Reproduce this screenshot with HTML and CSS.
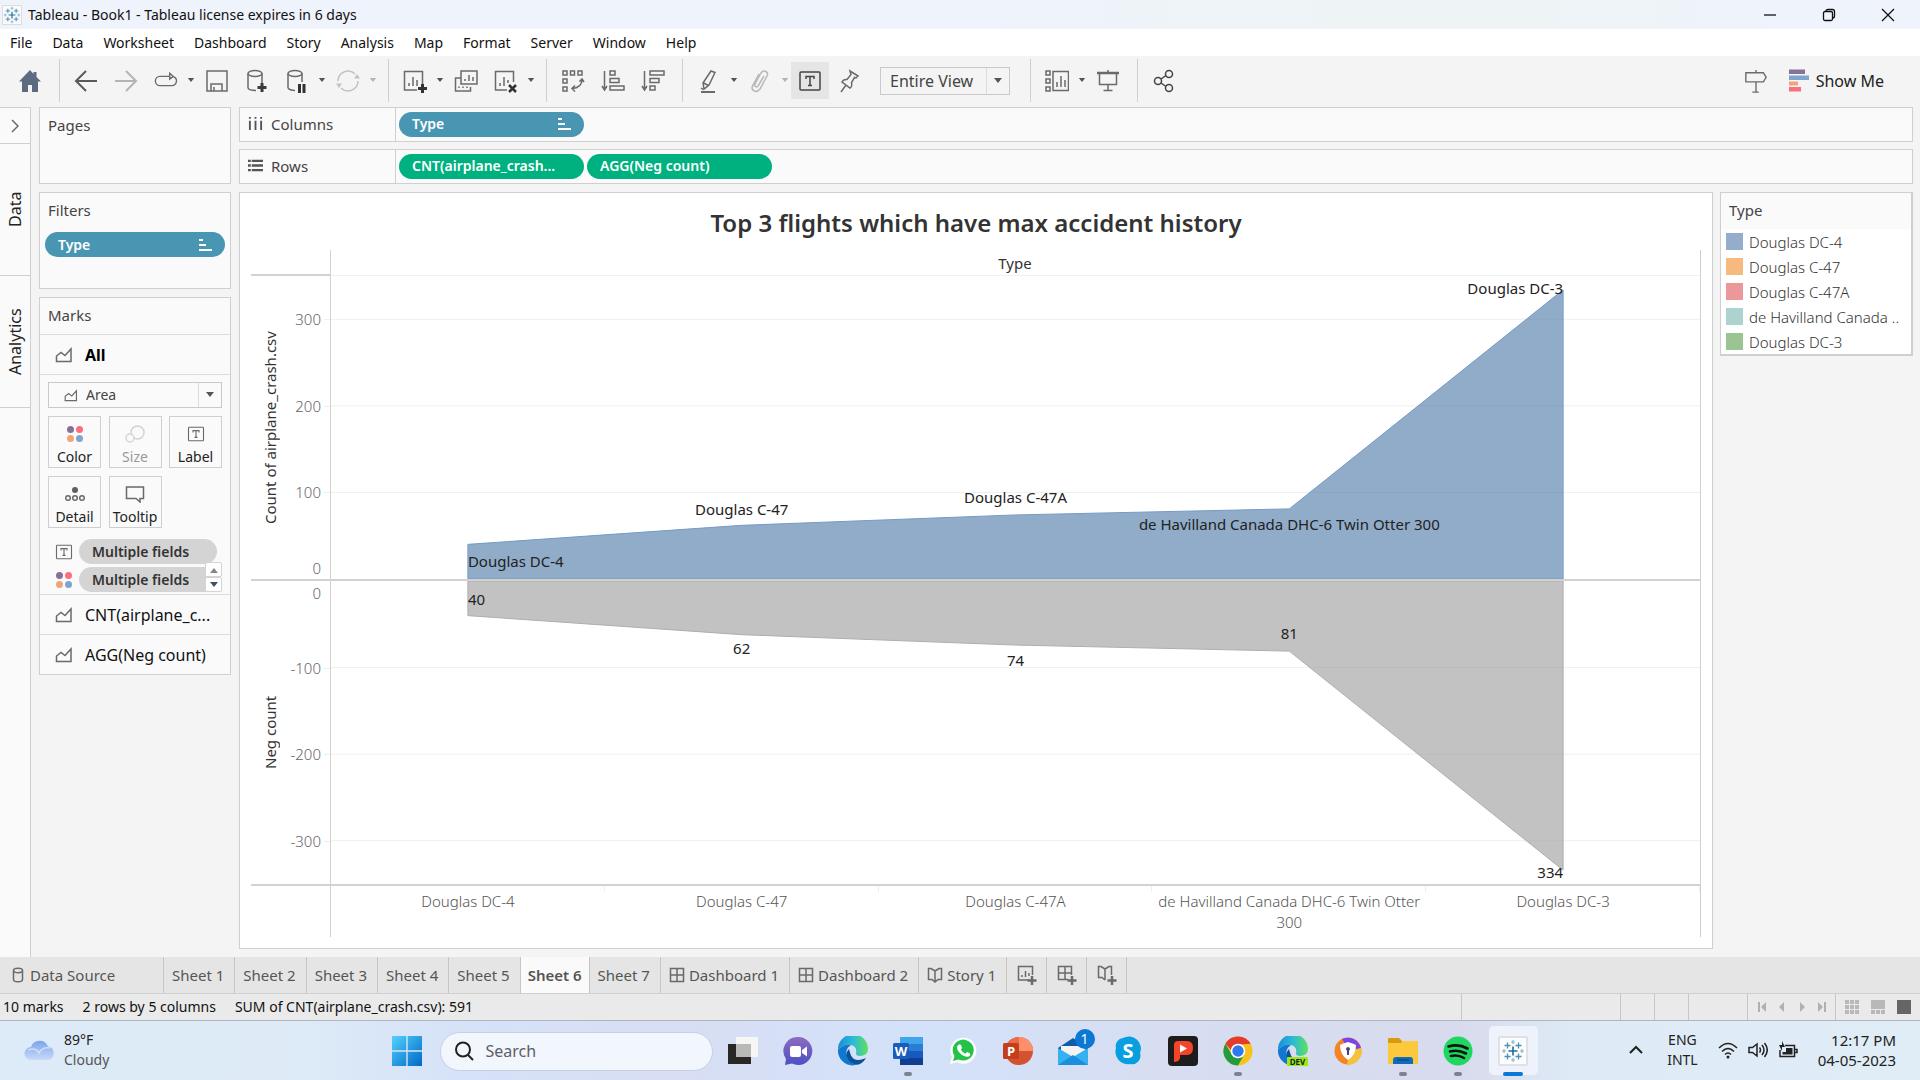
FILE: index.html
```html
<!DOCTYPE html>
<html lang="en">
<head>
<meta charset="utf-8">
<title>Tableau - Book1</title>
<link rel="stylesheet" href="styles.css">
</head>
<body>
<svg class="sprite" aria-hidden="true">
  <symbol id="caret" viewBox="0 0 10 6"><path d="M1 0h8L5 5z" fill="currentColor"/></symbol>
  <symbol id="area" viewBox="0 0 18 16"><path d="M1.5 14.5V9L6 5.500l4 3 6-6.500v12.500z"/></symbol>
  <symbol id="sort" viewBox="0 0 14 14"><path d="M1 1h4v2H1zM1 6h7v2H1zM1 11h13v2H1z" fill="currentColor"/></symbol>
  <symbol id="boxt" viewBox="0 0 24 24"><rect x="2" y="3" width="20" height="18" rx="1"/><path d="M8 10V7.500h8V10M12 7.500v9M10 16.500h4"/></symbol>
  <symbol id="dots" viewBox="0 0 18 18"><circle cx="4.500" cy="4.500" r="3.500" fill="#87709b"/><circle cx="13.500" cy="4.500" r="3.500" fill="#fa6e80"/><circle cx="4.500" cy="13.500" r="3.500" fill="#f2a477"/><circle cx="13.500" cy="13.500" r="3.500" fill="#7ea5cd"/></symbol>
  <symbol id="grid" viewBox="0 0 16 16"><path d="M1.500 1.500h13v13h-13zM8 1.500v13M1.500 8h13"/></symbol>
  <symbol id="book" viewBox="0 0 16 16"><path d="M8 4v11M8 4L4 1.500H1.500v11H5L8 15l3-2.500h3.500v-11H12z"/></symbol>
  <symbol id="tableau" viewBox="0 0 24 24"><path d="M12 7.500v9M7.500 12h9" stroke="#1f6c9c" stroke-width="1.600"/><path d="M6.500 3.500v6M3.500 6.500h6M17.500 3.500v6M14.500 6.500h6M6.500 14.500v6M3.500 17.500h6M17.500 14.500v6M14.500 17.500h6" stroke="#4a8fb8" stroke-width="1.300"/><path d="M12 1v4M10 3h4M12 19v4M10 21h4M3 10v4M1 12h4M21 10v4M19 12h4" stroke="#7fb2d0" stroke-width="1.100"/></symbol>
</svg>

<div class="app">
  <header class="titlebar">
    <svg class="app-logo" viewBox="0 0 24 24"><use href="#tableau"/></svg>
    <span class="app-title">Tableau - Book1 - Tableau license expires in 6 days</span>
    <div class="window-buttons">
      <button aria-label="Minimize"><svg viewBox="0 0 14 14"><path d="M1 7h12"/></svg></button>
      <button aria-label="Restore"><svg viewBox="0 0 14 14"><rect x="1.500" y="3.500" width="9" height="9" rx="1.500"/><path d="M4 3.500q0-2 2-2h4.500q2 0 2 2V8q0 2-2 2"/></svg></button>
      <button aria-label="Close"><svg viewBox="0 0 14 14"><path d="M1 1l12 12M13 1L1 13"/></svg></button>
    </div>
  </header>

  <nav class="menubar">
    <a href="#">File</a><a href="#">Data</a><a href="#">Worksheet</a><a href="#">Dashboard</a><a href="#">Story</a><a href="#">Analysis</a><a href="#">Map</a><a href="#">Format</a><a href="#">Server</a><a href="#">Window</a><a href="#">Help</a>
  </nav>

  <div class="toolbar">
    <button class="tool" aria-label="Start page"><svg viewBox="0 0 24 24"><path d="M12 1L1 12.500h3V23h6v-7h4v7h6V12.500h3L18.500 8V3h-3v2z" fill="#5d6b80" stroke="none"/></svg></button>
    <i class="sep"></i>
    <button class="tool" aria-label="Undo"><svg viewBox="0 0 24 24"><path d="M23 12H2M12 2L2 12l10 10" stroke="#5a5a5a" stroke-width="2"/></svg></button>
    <button class="tool" aria-label="Redo"><svg viewBox="0 0 24 24"><path d="M1 12h21M12 2l10 10-10 10" stroke="#b4b4b4" stroke-width="2"/></svg></button>
    <button class="tool menu" aria-label="Replay"><svg viewBox="0 0 26 24"><path d="M17 7H6.500a5 5 0 0 0 0 10h13a5 5 0 0 0 2-9.500M17 3.500V10l4-3z"/></svg></button><button class="drop" aria-label="Replay options"><svg><use href="#caret"/></svg></button>
    <button class="tool" aria-label="Save"><svg viewBox="0 0 24 24"><path d="M2 2h20v20H2zM6 22v-7h11v7M9 18v4"/></svg></button>
    <button class="tool" aria-label="New data source"><svg viewBox="0 0 24 24"><ellipse cx="10" cy="4.500" rx="7" ry="3"/><path d="M3 4.500v14c0 2 4 3 8 3M17 4.500V14"/><path d="M17 14v9M12.500 18.500h9" stroke="#3a3a3a" stroke-width="3"/></svg></button>
    <button class="tool menu" aria-label="Pause auto updates"><svg viewBox="0 0 24 24"><ellipse cx="10" cy="4.500" rx="7" ry="3"/><path d="M3 4.500v14c0 2 4 3 7 3M17 4.500V13"/><path d="M14.500 15v9M19 15v9" stroke="#333" stroke-width="3"/></svg></button><button class="drop" aria-label="Pause options"><svg><use href="#caret"/></svg></button>
    <button class="tool menu" aria-label="Run update"><svg viewBox="0 0 24 24"><path d="M2 12a10 10 0 0 1 17-7M22 12a10 10 0 0 1-17 7" stroke="#c2c2c2"/><path d="M18 9.500h6L21 5zM0 14.500h6L3 19z" fill="#c2c2c2" stroke="none"/></svg></button><button class="drop off" aria-label="Update options"><svg><use href="#caret"/></svg></button>
    <i class="sep"></i>
    <button class="tool menu" aria-label="New worksheet"><svg viewBox="0 0 24 24"><path d="M14 21H1.500V2.500h18V15M6 17v-3M10 17V8M14 17v-6"/><path d="M19.500 15v9M15 19.500h9" stroke="#333" stroke-width="3"/></svg></button><button class="drop" aria-label="New worksheet options"><svg><use href="#caret"/></svg></button>
    <button class="tool" aria-label="Duplicate"><svg viewBox="0 0 24 24"><path d="M7 2h16v13H7zM11 12v-2M15 12V6M19 12V8M7 9H1.500v13h15v-4M5 19v-1.500M9 19v-1.500M13 19v-1.500"/></svg></button>
    <button class="tool menu" aria-label="Clear sheet"><svg viewBox="0 0 24 24"><path d="M13 21H1.500V2.500h18V13M6 17v-3M10 17V8M14 14v-3"/><path d="M15 16l7 7M22 16l-7 7" stroke="#333" stroke-width="2.500"/></svg></button><button class="drop" aria-label="Clear options"><svg><use href="#caret"/></svg></button>
    <i class="sep"></i>
    <button class="tool" aria-label="Swap rows and columns"><svg viewBox="0 0 24 24"><path d="M2 2h4v4H2zM9.500 2h4v4h-4zM17 2h4v4h-4zM2 10h4v4H2zM2 18h4v4H2zM21 10q0 9-10 9.500M18.500 12.500L21 10l2 3M14 16.500l-3 3 3 3"/></svg></button>
    <button class="tool" aria-label="Sort ascending"><svg viewBox="0 0 24 24"><path d="M3.500 2v18M1 17l2.500 4L6 17M9 2h5v4H9zM9 9.500h9v4H9zM9 17h14v4H9z"/></svg></button>
    <button class="tool" aria-label="Sort descending"><svg viewBox="0 0 24 24"><path d="M3.500 2v18M1 17l2.500 4L6 17M9 2h14v4H9zM9 9.500h9v4H9zM9 17h5v4H9z"/></svg></button>
    <i class="sep"></i>
    <button class="tool menu" aria-label="Highlight"><svg viewBox="0 0 24 24"><path d="M14 2l4 1.500-6 12.500-5 4-1-6zM6.500 14l5 2.500M4 19l2 1.500"/><path d="M4 23h14" stroke-width="2"/></svg></button><button class="drop" aria-label="Highlight options"><svg><use href="#caret"/></svg></button>
    <button class="tool menu" aria-label="Group members"><svg viewBox="0 0 24 24"><path d="M16 7l-6 10c-2 2-4 0-3-2l6-11c3-4 8-1 6 3l-7 13c-4 5-10 1-7-4l6-11" stroke="#b9b9b9"/></svg></button><button class="drop off" aria-label="Group options"><svg><use href="#caret"/></svg></button>
    <button class="tool on" aria-label="Show mark labels" aria-pressed="true"><svg class="dark"><use href="#boxt"/></svg></button>
    <button class="tool" aria-label="Fix axes"><svg viewBox="0 0 24 24"><path d="M13 2l8 5-2 2-1.500-.5-3 5q1 4-1.500 5.500L5 13q1.500-3 5-2.500l4-5zM9 16l-5 7"/></svg></button>
    <div class="select fit"><select aria-label="Fit"><option>Entire View</option></select><svg><use href="#caret"/></svg></div>
    <i class="sep wide"></i>
    <button class="tool menu" aria-label="Show cards"><svg viewBox="0 0 24 24"><path d="M1 2h4v4H1zM1 10h4v4H1zM1 18h4v4H1zM8 2.500h15.500v19H8zM12 18v-5M16 18V7M20 18v-7"/></svg></button><button class="drop" aria-label="Card options"><svg><use href="#caret"/></svg></button>
    <button class="tool" aria-label="Presentation mode"><svg viewBox="0 0 24 24"><path d="M1 4h22" stroke-width="2.500"/><path d="M12 1v3M3.500 4v11.500h17V4M12 15.500v6M7.500 21.500h9"/></svg></button>
    <i class="sep"></i>
    <button class="tool" aria-label="Share"><svg class="dark" viewBox="0 0 24 24"><circle cx="6" cy="12" r="3.500"/><circle cx="17" cy="5" r="3.500"/><circle cx="17" cy="19" r="3.500"/><path d="M9 10l5-3.500M9 14l5 3.500"/></svg></button>
    <button class="tool guide" aria-label="Guide"><svg viewBox="0 0 24 26"><path d="M1 4h19l3 5-3 5H1zM12 1v3M12 14v11M8 25h7"/></svg></button>
    <button class="show-me"><svg viewBox="0 0 22 22"><path d="M1 0h16v4.500H1z" fill="#87709b"/><path d="M1 6h20v4.500H1z" fill="#7ea5cd"/><path d="M1 12h9v4H1z" fill="#f2a477"/><path d="M1 17.500h12V22H1z" fill="#fa6e80"/></svg>Show Me</button>
  </div>

  <main class="workspace">
    <aside class="rail">
      <button class="expand" aria-label="Expand pane"><svg viewBox="0 0 8 14"><path d="M1 1l6 6-6 6"/></svg></button>
      <button class="rail-tab">Data</button>
      <button class="rail-tab">Analytics</button>
    </aside>

    <aside class="cards">
      <section class="card pages"><h2>Pages</h2></section>
      <section class="card filters"><h2>Filters</h2><button class="pill blue">Type<svg><use href="#sort"/></svg></button></section>
      <section class="card marks">
        <h2>Marks</h2>
        <button class="mark-row all"><svg><use href="#area"/></svg>All</button>
        <div class="mark-body">
          <div class="select type"><svg class="lead"><use href="#area"/></svg><select aria-label="Mark type"><option>Area</option></select><svg><use href="#caret"/></svg></div>
          <div class="mark-buttons">
            <button><svg viewBox="0 0 18 18"><use href="#dots"/></svg>Color</button>
            <button disabled><svg viewBox="0 0 20 18"><circle cx="12.500" cy="7.500" r="6.500"/><circle cx="5" cy="13" r="4" fill="#fafafa"/></svg>Size</button>
            <button><svg><use href="#boxt"/></svg>Label</button>
            <button><svg viewBox="0 0 20 18"><circle cx="10" cy="5" r="3" fill="#5f5f5f" stroke="none"/><circle cx="3" cy="13" r="2.300"/><circle cx="10" cy="13" r="2.300"/><circle cx="17" cy="13" r="2.300"/></svg>Detail</button>
            <button><svg viewBox="0 0 20 18"><path d="M1.500 2h17v11.500H15V17l-4-3.500H1.500z"/></svg>Tooltip</button>
          </div>
          <div class="encodings">
            <svg><use href="#boxt"/></svg><button class="pill gray">Multiple fields</button>
            <svg><use href="#dots"/></svg><button class="pill gray">Multiple fields</button>
            <div class="stepper"><button aria-label="Scroll up"><svg class="flip"><use href="#caret"/></svg></button><button aria-label="Scroll down"><svg><use href="#caret"/></svg></button></div>
          </div>
        </div>
        <button class="mark-row"><svg><use href="#area"/></svg>CNT(airplane_c...</button>
        <button class="mark-row"><svg><use href="#area"/></svg>AGG(Neg count)</button>
      </section>
    </aside>

    <div class="canvas">
      <section class="shelf">
        <h2><svg viewBox="0 0 16 16"><path d="M2 1v2M2 5v10M8 1v2M8 5v10M14 1v2M14 5v10" stroke-width="2"/></svg>Columns</h2>
        <div class="drops"><button class="pill blue">Type<svg><use href="#sort"/></svg></button></div>
      </section>
      <section class="shelf">
        <h2><svg viewBox="0 0 16 16"><path d="M0 3h3M4 3h12M0 8h3M4 8h12M0 13h3M4 13h12" stroke-width="2.500"/></svg>Rows</h2>
        <div class="drops"><button class="pill green">CNT(airplane_crash...</button><button class="pill green">AGG(Neg count)</button></div>
      </section>

      <div class="stage">
        <section class="view">
          <h1>Top 3 flights which have max accident history</h1>
          <div class="chart">
            <div class="corner"></div>
            <div class="col-title">Type</div>

            <div class="axis">
              <span class="axis-title">Count of airplane_crash.csv</span>
              <span class="tick" style="--y:14.300%">300</span><span class="tick" style="--y:42.900%">200</span><span class="tick" style="--y:71.400%">100</span><span class="tick zero" style="--y:96.500%">0</span>
            </div>
            <div class="pane">
              <svg viewBox="0 0 500 350" preserveAspectRatio="none">
                <path class="gridline" d="M0 50H500M0 150H500M0 250H500"/>
                <path class="mark-blue" d="M50 350V310L150 288L250 276L350 269L450 16V350z"/>
              </svg>
              <span class="label start" style="--x:10%;--y:94%">Douglas DC-4</span>
              <span class="label" style="--x:30%;--y:77%">Douglas C-47</span>
              <span class="label" style="--x:50%;--y:73%">Douglas C-47A</span>
              <span class="label" style="--x:70%;--y:82%">de Havilland Canada DHC-6 Twin Otter 300</span>
              <span class="label end" style="--x:90%;--y:4%">Douglas DC-3</span>
            </div>

            <div class="axis">
              <span class="axis-title">Neg count</span>
              <span class="tick zero" style="--y:4%">0</span><span class="tick" style="--y:28.600%">-100</span><span class="tick" style="--y:57.100%">-200</span><span class="tick" style="--y:85.700%">-300</span>
            </div>
            <div class="pane">
              <svg viewBox="0 0 500 350" preserveAspectRatio="none">
                <path class="gridline" d="M0 100H500M0 200H500M0 300H500"/>
                <path class="mark-gray" d="M50 0V40L150 62L250 74L350 81L450 334V0z"/>
              </svg>
              <span class="label start" style="--x:10%;--y:6%">40</span>
              <span class="label" style="--x:30%;--y:22%">62</span>
              <span class="label" style="--x:50%;--y:26%">74</span>
              <span class="label" style="--x:70%;--y:17%">81</span>
              <span class="label end" style="--x:90%;--y:96%">334</span>
            </div>

            <div class="corner-bottom"></div>
            <div class="columns"><span>Douglas DC-4</span><span>Douglas C-47</span><span>Douglas C-47A</span><span>de Havilland Canada DHC-6 Twin Otter 300</span><span>Douglas DC-3</span></div>
          </div>
        </section>

        <section class="legend">
          <h2>Type</h2>
          <ul><li class="c1">Douglas DC-4</li><li class="c2">Douglas C-47</li><li class="c3">Douglas C-47A</li><li class="c4">de Havilland Canada ..</li><li class="c5">Douglas DC-3</li></ul>
        </section>
      </div>
    </div>
  </main>

  <nav class="tabs">
    <button class="source"><svg viewBox="0 0 16 16"><ellipse cx="8" cy="3.500" rx="4.500" ry="2.200"/><path d="M3.500 3.500v9c0 3 9 3 9 0v-9"/></svg>Data Source</button>
    <button>Sheet 1</button><button>Sheet 2</button><button>Sheet 3</button><button>Sheet 4</button><button>Sheet 5</button><button class="current">Sheet 6</button><button>Sheet 7</button>
    <button><svg><use href="#grid"/></svg>Dashboard 1</button><button><svg><use href="#grid"/></svg>Dashboard 2</button><button><svg><use href="#book"/></svg>Story 1</button>
    <button class="add" aria-label="New worksheet"><svg viewBox="0 0 20 20"><path d="M12 15H1.500V1.500h14V10M5 12v-2M8.500 12V6M12 11V8"/><path d="M15 11v9M10.500 15.500h9" stroke-width="2.500"/></svg></button>
    <button class="add" aria-label="New dashboard"><svg viewBox="0 0 20 20"><path d="M11 14.500H1.500v-13h13V10M8 1.500v13M1.500 8h13"/><path d="M15 11v9M10.500 15.500h9" stroke-width="2.500"/></svg></button>
    <button class="add" aria-label="New story"><svg viewBox="0 0 20 20"><path d="M8 4v11M8 4L4 1.500H1.500v11H5L8 15M8 4l4-2.500h2.500V10"/><path d="M15 11v9M10.500 15.500h9" stroke-width="2.500"/></svg></button>
  </nav>

  <footer class="status">
    <span>10 marks</span><span>2 rows by 5 columns</span><span>SUM of CNT(airplane_crash.csv): 591</span>
    <div class="status-right">
      <i class="cell w159"></i><i class="cell w34"></i><i class="cell w34"></i><i class="cell w59"></i>
      <div class="cell pager">
        <button aria-label="First"><svg viewBox="0 0 10 10"><path d="M1 0h2v10H1zM9 0v10L4 5z"/></svg></button>
        <button aria-label="Previous"><svg viewBox="0 0 10 10"><path d="M7 0v10L2 5z"/></svg></button>
        <button aria-label="Next"><svg viewBox="0 0 10 10"><path d="M3 0v10l5-5z"/></svg></button>
        <button aria-label="Last"><svg viewBox="0 0 10 10"><path d="M7 0h2v10H7zM1 0v10l5-5z"/></svg></button>
      </div>
      <div class="cell modes">
        <button aria-label="Sheet sorter"><svg viewBox="0 0 14 14"><path d="M0 0h4v4H0zM5 0h4v4H5zM10 0h4v4h-4zM0 5h4v4H0zM5 5h4v4H5zM10 5h4v4h-4zM0 10h4v4H0zM5 10h4v4H5zM10 10h4v4h-4z"/></svg></button>
        <button aria-label="Filmstrip"><svg viewBox="0 0 14 14"><path d="M0 0h14v9H0zM0 10h4v4H0zM5 10h4v4H5zM10 10h4v4h-4z"/></svg></button>
        <button class="active" aria-label="Tabs"><svg viewBox="0 0 14 14"><path d="M0 0h14v14H0z"/></svg></button>
      </div>
    </div>
  </footer>
</div>

<footer class="taskbar">
  <button class="weather">
    <svg viewBox="0 0 32 24"><defs><linearGradient id="cl" x2="0" y2="1"><stop stop-color="#7ea3ec"/><stop offset="1" stop-color="#c7daf8"/></linearGradient></defs><path d="M7 22a6.500 6.500 0 0 1 0-13 9 9 0 0 1 17-.5 7 7 0 0 1 1 13.500z" fill="url(#cl)"/><path d="M4 12q8-3 11 3 3-6 11-5" fill="none" stroke="#e4edfc" stroke-width="1.500" opacity=".7"/></svg>
    <span><b>89°F</b>Cloudy</span>
  </button>

  <div class="dock">
    <button aria-label="Start"><svg viewBox="0 0 30 30"><defs><linearGradient id="win" x2="1" y2="1"><stop stop-color="#52d1fb"/><stop offset="1" stop-color="#0068c8"/></linearGradient></defs><path d="M0 0h14.300v14.300H0zM15.700 0H30v14.300H15.700zM0 15.700h14.300V30H0zM15.700 15.700H30V30H15.700z" fill="url(#win)"/></svg></button>
    <label class="search"><svg viewBox="0 0 20 20"><circle cx="9" cy="8.500" r="7"/><path d="M14 14l5 5"/></svg><input type="search" placeholder="Search" aria-label="Search"></label>
    <button aria-label="Task view"><svg viewBox="0 0 30 30"><path d="M0 8h23v20H0z" fill="#292826"/><path d="M8 1h22v20H8z" fill="#f6f6f6"/><path d="M8 8h15v13H8z" fill="#b9b9b8"/></svg></button>
    <button aria-label="Chat"><svg viewBox="0 0 30 30"><defs><linearGradient id="ch" x2="0" y2="1"><stop stop-color="#8d6cc0"/><stop offset="1" stop-color="#4d50c4"/></linearGradient></defs><path d="M15 1a14 14 0 1 1-6 26.500L2 29l1-6A14 14 0 0 1 15 1z" fill="url(#ch)"/><rect x="7" y="10" width="11" height="11" rx="2" fill="#fff"/><path d="M19 14l5-3.500v10L19 17z" fill="#fff"/></svg></button>
    <button aria-label="Edge"><svg viewBox="0 0 30 30"><use href="#edge"/></svg></button>
    <button class="open" aria-label="Word"><svg viewBox="0 0 30 30"><path d="M7 1h23v8H7z" fill="#41a5ee"/><path d="M7 8h23v7H7z" fill="#2b7cd3"/><path d="M7 15h23v7H7z" fill="#185abd"/><path d="M7 22h23v7H7z" fill="#103f91"/><rect y="7" width="16" height="16" rx="1.500" fill="#1a5cbe"/><text x="8" y="19.500" class="glyph">W</text></svg></button>
    <button aria-label="WhatsApp"><svg viewBox="0 0 30 30"><path d="M2 28l2-7a13 13 0 1 1 5 5z" fill="#fff"/><path d="M5 25l1.500-5a10.500 10.500 0 1 1 4 3.500z" fill="#25c24a"/><path d="M11 8.500c2-1 2.500 2 3 3.500l-1.200 1.500q1.500 3 4.500 4.200L19 16c3 1 4 2 3 3.500-3 4-13-2.500-13-8q0-2 2-3z" fill="#fff"/></svg></button>
    <button aria-label="PowerPoint"><svg viewBox="0 0 30 30"><circle cx="16" cy="15" r="14" fill="#d35230"/><path d="M16 1a14 14 0 0 1 14 14H16z" fill="#ff8f6b"/><path d="M16 1v14H2A14 14 0 0 1 16 1z" fill="#ed6c47"/><rect y="7" width="16" height="16" rx="1.500" fill="#c43e1c"/><text x="8" y="19.500" class="glyph">P</text></svg></button>
    <button class="badged" aria-label="Mail, 1 unread"><svg viewBox="0 0 30 30"><path d="M0 12L15 2l15 10v17H0z" fill="#0f5da8"/><path d="M3 10h24v10H3z" fill="#f4f4f4"/><path d="M0 12l15 9 15-9v17H0z" fill="#35b1f1"/><path d="M0 29l15-10 15 10z" fill="#1b8fdc"/></svg><span class="badge">1</span></button>
    <button aria-label="Skype"><svg viewBox="0 0 30 30"><path d="M10 2A12 12 0 0 1 27 17a8.500 8.500 0 0 1-10 11A12.500 12.500 0 0 1 3 12 8 8 0 0 1 10 2z" fill="#089fe0"/><text x="15" y="22" class="glyph big">S</text></svg></button>
    <button aria-label="Video player"><svg viewBox="0 0 30 30"><rect width="30" height="30" rx="4" fill="#1d1d1d"/><path d="M6 9q0-4 4-4h9q6 0 6 7t-6 7h-7v3q-1 4-6 4z" fill="#f4452a"/><path d="M12 8.500v8l7-4z" fill="#fff"/></svg></button>
    <button class="open" aria-label="Chrome"><svg viewBox="0 0 30 30"><circle cx="15" cy="15" r="14.500" fill="#f9c21a"/><path d="M2.400 7.700A14.500 14.500 0 0 1 27.600 7.700L15 8.500z" fill="#e33b2e"/><path d="M2.400 7.700A14.500 14.500 0 0 0 15 29.500L21.300 18.500 15 15 8.700 18.500z" fill="#249a45"/><path d="M2.400 7.700h25.200H15L9 15z" fill="#e33b2e"/><circle cx="15" cy="15" r="7.300" fill="#fff"/><circle cx="15" cy="15" r="5.700" fill="#2f78ee"/></svg></button>
    <button aria-label="Edge Dev"><svg viewBox="0 0 30 30"><use href="#edge"/><rect x="9" y="21" width="21" height="9" rx="1" fill="#9be812"/><text x="19.500" y="28.500" class="glyph dev">DEV</text></svg></button>
    <button aria-label="Secure browser"><svg viewBox="0 0 30 30"><circle cx="15" cy="15" r="13.500" fill="#f58424"/><path d="M9 3a13.500 13.500 0 0 1 19 9l-12 2z" fill="#7a46e8"/><path d="M28.500 12A13.500 13.500 0 0 1 14 28.500l3-13z" fill="#f6c23d"/><path d="M15 6q5 1.500 8 3 0 10-8 15-8-5-8-15 3-1.500 8-3z" fill="#fff"/><path d="M15 11a2 2 0 0 1 1 3.700V19h-2v-4.300A2 2 0 0 1 15 11z" fill="#4a3f78"/></svg></button>
    <button class="open" aria-label="File Explorer"><svg viewBox="0 0 30 30"><path d="M0 3q0-1 1-1h10l3 3v5H0z" fill="#d99a0c"/><path d="M0 7h13l2-2h15v23H0z" fill="#fcc93c"/><path d="M5 28v-4q0-3 3-3h14q3 0 3 3v4z" fill="#0f6cbd"/><path d="M9 24h12" stroke="#0a4a86" stroke-width="1.500"/></svg></button>
    <button class="open" aria-label="Spotify"><svg viewBox="0 0 30 30"><circle cx="15" cy="15" r="14.500" fill="#1ed760"/><path d="M5.500 10.500q10-3 19 2M7 15.500q8-2.300 16 2M8 20q7-1.700 13 2" fill="none" stroke="#111" stroke-width="2.600" stroke-linecap="round"/></svg></button>
    <button class="focused" aria-label="Tableau"><svg viewBox="0 0 30 30"><rect x="1" y="1" width="28" height="28" rx="1" fill="#fcfcfc" stroke="#d6d9de"/><use href="#tableau" x="3" y="3" width="24" height="24"/></svg></button>
  </div>

  <div class="tray">
    <button aria-label="Hidden icons"><svg viewBox="0 0 14 10"><path d="M1 8l6-6 6 6" stroke-width="2"/></svg></button>
    <button class="lang">ENG<br>INTL</button>
    <button class="net" aria-label="Network, volume, battery">
      <svg viewBox="0 0 20 18"><path d="M1 7q9-9 18 0M4 10.500q6-6 12 0M7 13.500q3-3 6 0"/><circle cx="10" cy="16" r="1.500" fill="#222" stroke="none"/></svg>
      <svg viewBox="0 0 20 18"><path d="M1 6.500h3.500L9 3v12l-4.500-3.500H1zM11.500 6.500q2 2.500 0 5M14 4q4 5 0 10M16.500 2q5.500 7 0 14"/></svg>
      <svg viewBox="0 0 20 18"><path d="M7 4.500h9.500v11H2V9M17 8.500h2v3h-2"/><path d="M8 7h6.500v6.500H4.500V11H8z" fill="#222" stroke="none"/><path d="M4 0v4H1l3 6V6h3z" fill="#222" stroke="none"/></svg>
    </button>
    <button class="clock">12:17 PM<br>04-05-2023</button>
  </div>
  <svg class="sprite" aria-hidden="true"><defs><linearGradient id="eg" x2="1"><stop stop-color="#1c8bd8"/><stop offset=".5" stop-color="#2bbbd6"/><stop offset="1" stop-color="#5fe05a"/></linearGradient></defs>
    <symbol id="edge" viewBox="0 0 30 30"><path d="M0 14A15 15 0 0 1 30 12.500q0 7-7.500 7.500-4.500 0-4.500-2.500 1.500-7-5-8.500Q5 8 0 14z" fill="url(#eg)"/><path d="M0 14q5-6 13-5-5 3-4.500 8 1 9 9 11.500-1 1-3 1A15 15 0 0 1 0 14z" fill="#1177cf"/><path d="M11 13q-3 3-2.500 6 1 7.500 9 9.800Q24 29 28 22q-11 5-15-2.500-1.500-4-2-6.500z" fill="#0c4f9b"/></symbol></svg>
</footer>
</body>
</html>
```

FILE: styles.css
```css
* { box-sizing: border-box; }
body {
  margin: 0;
  min-height: 100vh;
  display: flex;
  flex-direction: column;
  font: 15px/20px "Noto Sans", "Open Sans", sans-serif;
  color: #333;
  background: #f4f4f4;
}
h1, h2, ul { margin: 0; padding: 0; font-weight: 400; }
h2 { font-size: 15px; color: #444; }
ul { list-style: none; }
button, select, input { font: inherit; color: inherit; background: none; border: 0; padding: 0; margin: 0; }
button { display: flex; align-items: center; white-space: nowrap; }
a { color: inherit; text-decoration: none; }
svg { display: block; flex: none; fill: none; stroke: #6a6a6a; stroke-width: 1.5; }
.sprite { position: absolute; width: 0; height: 0; }
svg:has(use[href="#caret"]), svg:has(use[href="#sort"]) { stroke: none; }
svg:has(use[href="#dots"]) { stroke: none; }

.app { flex: 1; display: flex; flex-direction: column; }

/* Title and menu */
.titlebar { display: flex; align-items: center; height: 29px; padding-left: 2px; background: linear-gradient(90deg, #eff3fb 52%, #eef4f6 70%, #eef4f6 80%, #eff3fb 92%); font-size: 14px; color: #111; }
.app-logo { width: 20px; height: 20px; background: #fafafa; border: 1px solid #ddd; margin-right: 6px; }
.window-buttons { display: flex; margin-left: auto; padding-right: 3px; }
.window-buttons button { width: 59px; height: 29px; justify-content: center; }
.window-buttons svg { width: 14px; height: 14px; stroke: #111; stroke-width: 1.3; }
.menubar { display: flex; gap: 20px; height: 27px; align-items: center; padding: 0 10px; background: #fff; font-size: 14px; color: #111; }

/* Toolbar */
.toolbar { display: flex; align-items: center; height: 51px; padding: 0 10px 2px; }
.tool { height: 37px; padding: 0 8px; }
.tool svg { width: 24px; height: 24px; }
.tool.menu { padding-right: 6px; }
.tool.on { padding: 0 7px; background: #e5e5e5; }
.tool .dark { stroke: #444; }
.drop { width: 13px; height: 37px; justify-content: center; color: #555; }
.drop svg { width: 8px; height: 5px; }
.drop.off { color: #b4b4b4; }
.sep { width: 1px; height: 43px; margin: 0 6px 0 9px; background: #cfcfcf; }
.sep.wide { margin-left: 20px; }
.select { position: relative; display: flex; align-items: center; border: 1px solid #c9c9c9; color: #555; }
.select select { flex: 1; min-width: 0; height: 100%; appearance: none; color: #444; }
.select svg:last-child { position: absolute; right: 6px; width: 10px; height: 6px; pointer-events: none; }
.select::after { content: ""; position: absolute; right: 22px; top: 0; bottom: 0; width: 1px; background: #dcdcdc; }
.fit { width: 130px; height: 28px; margin-left: 11px; font-size: 16px; }
.fit select { padding-left: 9px; }
.guide { margin-left: auto; }
.show-me { gap: 6px; margin: 0 26px 0 12px; font-size: 16px; color: #222; }
.show-me svg { width: 22px; height: 23px; stroke: none; }

/* Workspace */
.workspace { flex: 1; display: flex; padding-bottom: 8px; }
.rail { width: 31px; margin-bottom: -8px; border: 1px solid #cfcfcf; border-width: 1px 1px 0 0; background: #fafafa; }
.rail button { width: 100%; justify-content: center; border-bottom: 1px solid #cfcfcf; color: #222; }
.expand { height: 36px; }
.expand svg { width: 8px; height: 14px; }
.rail-tab { height: 132px; writing-mode: vertical-rl; transform: rotate(180deg); font-size: 16px; }
.rail .rail-tab { border-width: 1px 0 0; border-top: 1px solid #cfcfcf; }
.cards { width: 192px; margin-left: 8px; display: flex; flex-direction: column; gap: 8px; }
.card { border: 1px solid #cfcfcf; background: #fafafa; }
.card h2, .legend h2 { padding: 7px 8px 9px; }
.pages { height: 77px; }
.filters { height: 97px; }
.pill { height: 25px; padding: 0 13px; border-radius: 13px; font-size: 14px; font-weight: 600; color: #fff; }
.pill svg { width: 14px; height: 14px; margin-left: auto; }
.blue { background: #4996b2; }
.green { background: #00b180; }
.gray { background: #d4d4d4; color: #333; }
.filters .pill { width: 180px; margin: 3px 5px; }
.mark-row { width: 100%; height: 40px; padding-left: 15px; gap: 12px; border-top: 1px solid #dcdcdc; font-size: 16px; color: #111; }
.mark-row svg { width: 18px; height: 16px; }
.mark-row.all { font-weight: 700; color: #000; }
.mark-body { padding: 7px 8px 2px; border-top: 1px solid #dcdcdc; }
.type { height: 26px; font-size: 14px; }
.type .lead { width: 14px; height: 13px; margin: 0 8px 0 15px; }
.mark-buttons { display: grid; grid-template-columns: repeat(3, 53px); justify-content: space-between; gap: 8px 0; margin-top: 8px; }
.mark-buttons button { height: 52px; flex-direction: column; justify-content: space-between; padding: 8px 0 0; border: 1px solid #cfcfcf; font-size: 14px; color: #222; }
.mark-buttons svg { width: 20px; height: 18px; }
.mark-buttons button:disabled { color: #999; }
.mark-buttons button:disabled svg { stroke: #d4d4d4; }
.encodings { position: relative; display: grid; grid-template-columns: 18px 138px; align-items: center; gap: 3px 6px; padding: 11px 0 0 7px; }
.encodings > svg { width: 18px; height: 18px; }
.stepper { position: absolute; right: 0; bottom: 0; }
.stepper button { width: 17px; height: 15px; justify-content: center; background: #fff; border: 1px solid #d4d4d4; border-radius: 2px; color: #3f4f66; }
.stepper svg { width: 10px; height: 6px; }
.stepper .flip { transform: rotate(180deg); color: #888; }

.canvas { flex: 1; min-width: 0; display: flex; flex-direction: column; gap: 7px; padding: 0 7px 0 8px; }
.shelf { display: flex; height: 35px; border: 1px solid #cfcfcf; background: #fafafa; }
.shelf h2 { display: flex; align-items: center; gap: 8px; width: 156px; padding: 0 0 2px 8px; border-right: 1px solid #cfcfcf; }
.shelf h2 svg { width: 15px; height: 15px; stroke: #555; }
.drops { display: flex; align-items: center; gap: 3px; padding: 0 0 1px 3px; }
.drops .pill { width: 185px; }
.stage { flex: 1; display: flex; align-items: flex-start; gap: 7px; padding-top: 1px; }

/* Chart */
.view { flex: 1; align-self: stretch; display: flex; flex-direction: column; padding: 0 11px 11px; background: #fff; border: 1px solid #cfcfcf; }
.view h1 { padding: 16px 0 13px; font-size: 24px; line-height: 28px; font-weight: 600; text-align: center; color: #333; }
.chart { flex: 1; display: grid; grid-template: 26px minmax(200px, 1fr) minmax(200px, 1fr) 51px / 80px 1fr; }
.corner, .axis { border: 0 solid #d2d2d2; border-width: 0 1px 2px 0; }
.corner-bottom { border-right: 1px solid #cfcfcf; }
.col-title { text-align: center; font-size: 15px; line-height: 26px; border: 0 solid #cfcfcf; border-right-width: 1px; border-bottom: 1px solid #f0f0f0; padding-right: 1px; }
.axis { position: relative; color: #666; }
.axis-title { position: absolute; left: 9px; top: 0; bottom: 0; width: 20px; writing-mode: vertical-rl; transform: rotate(180deg); text-align: center; font-size: 15px; color: #333; }
.tick { position: absolute; right: 9px; top: var(--y); transform: translateY(-50%); font-size: 15px; font-weight: 300; }
.tick:not(.zero)::after { content: ""; position: absolute; right: -9px; top: 10px; width: 6px; height: 1px; background: #eee; }
.pane { position: relative; border: 0 solid #d2d2d2; border-width: 0 1px 2px 0; }
.pane svg { position: absolute; width: 100%; height: 100%; }
.pane path { vector-effect: non-scaling-stroke; stroke-width: 1; }
.pane .gridline { stroke: #efefef; }
.mark-blue { fill: #4e79a7; fill-opacity: .62; stroke: #749bc4; }
.mark-gray { fill: #999; fill-opacity: .6; stroke: #aeaeae; }
.label { position: absolute; left: var(--x); top: var(--y); transform: translate(-50%, -50%); white-space: nowrap; color: #222; }
.label.start { transform: translate(0, -50%); }
.label.end { transform: translate(-100%, -50%); }
.columns { display: grid; grid-template-columns: repeat(5, 1fr); border-right: 1px solid #cfcfcf; color: #555; text-align: center; line-height: 21px; font-weight: 300; }
.columns span { padding: 5px 1px 0; background: linear-gradient(#eee, #eee) right top / 1px 6px no-repeat; }
.legend { width: 193px; border: 1px solid #cfcfcf; border-width: 1px 2px 2px 1px; background: #fff; }
.legend h2 { background: #fafafa; }
.legend li { display: flex; align-items: center; gap: 6px; height: 25px; padding-left: 5px; white-space: nowrap; font-weight: 300; }
.legend li::before { content: ""; width: 17px; height: 17px; background: var(--c); }
.c1 { --c: #93adca; } .c2 { --c: #f6b97e; } .c3 { --c: #ec989a; } .c4 { --c: #acd3cf; } .c5 { --c: #9ac593; }

/* Sheet tabs and status */
.tabs { display: flex; height: 37px; background: #e5e5e5; border-bottom: 1px solid #cfcfcf; color: #555; }
.tabs button { padding: 0 10px 0 8px; gap: 4px; border-right: 1px solid #c6c6c6; }
.tabs svg { width: 16px; height: 16px; }
.tabs .source { width: 164px; padding: 0 10px; }
.tabs .current { background: #fafafa; font-weight: 600; padding: 0 7px; }
.tabs .add { width: 40px; justify-content: center; padding: 0; }
.tabs .add svg { width: 20px; height: 20px; }
.status { display: flex; align-items: center; gap: 19px; height: 26px; padding-left: 3px; background: #eaeaea; font-size: 14px; color: #111; }
.status-right { display: flex; align-self: stretch; margin-left: auto; }
.cell { display: flex; align-items: center; border-left: 1px solid #c6c6c6; }
.w159 { width: 159px; } .w34 { width: 34px; } .w59 { width: 59px; }
.pager { width: 88px; justify-content: center; gap: 10px; }
.pager svg { width: 10px; height: 10px; stroke: none; fill: #b0b0b0; }
.modes { width: 85px; justify-content: center; gap: 12px; }
.modes svg { width: 14px; height: 14px; stroke: none; fill: #b8b8b8; }
.modes .active svg { fill: #666; }

/* Taskbar */
.taskbar { display: grid; grid-template-columns: 1fr auto 1fr; align-items: stretch; height: 60px; border-top: 1px solid #aeb6c4; background: linear-gradient(90deg, #dcebf7 0, #deebf7 15%, #d6e2f8 24%, #d8def3 35%, #d3e2f9 48%, #d7def2 60%, #d8dbed 76%, #deeaf6 82%, #e0edf7 100%); color: #222; }
.weather { justify-self: start; gap: 8px; padding: 0 0 2px 24px; text-align: left; font-size: 14px; color: #555; }
.weather svg { width: 32px; height: 24px; stroke: none; }
.weather b { display: block; font-weight: 400; color: #222; }
.dock { display: flex; align-items: center; }
.dock button { position: relative; width: 55px; height: 60px; justify-content: center; }
.dock button > svg { width: 30px; height: 30px; stroke: none; }
.search { display: flex; align-items: center; gap: 12px; width: 273px; height: 39px; margin: 0 3px 0 5px; padding: 0 13px; border: 1px solid #c6d0e4; border-radius: 20px; background: #f2f6fd; }
.search svg { width: 20px; height: 20px; stroke: #222; stroke-width: 2; }
.search input { flex: 1; min-width: 0; outline: 0; font-size: 16px; }
.search input::placeholder { color: #5c5f66; opacity: 1; }
.open::after, .focused::after { content: ""; position: absolute; bottom: 5px; width: 8px; height: 4px; border-radius: 2px; background: #7c8290; }
.focused::after { width: 20px; background: #0a78d4; }
.focused::before { content: ""; position: absolute; inset: 5px 3px 6px; border-radius: 5px; background: #eef3fb; }
.focused svg { position: relative; }
.badge { position: absolute; top: 8px; right: 6px; width: 20px; height: 20px; border-radius: 10px; background: #0a78d4; color: #fff; text-align: center; font-size: 14px; }
.glyph { font: 700 13px "Open Sans", sans-serif; fill: #fff; text-anchor: middle; }
.glyph.big { font-size: 20px; }
.glyph.dev { font-size: 8px; fill: #123; }
.tray { display: flex; justify-self: end; align-items: stretch; gap: 24px; padding: 0 24px 2px 0; font-size: 14px; }
.tray svg { stroke: #222; width: 20px; height: 18px; }
.tray button:first-child svg { width: 14px; height: 10px; }
.lang { text-align: center; }
.net { gap: 10px; margin: 0 -4px; }
.clock { text-align: right; font-size: 15px; }
```
